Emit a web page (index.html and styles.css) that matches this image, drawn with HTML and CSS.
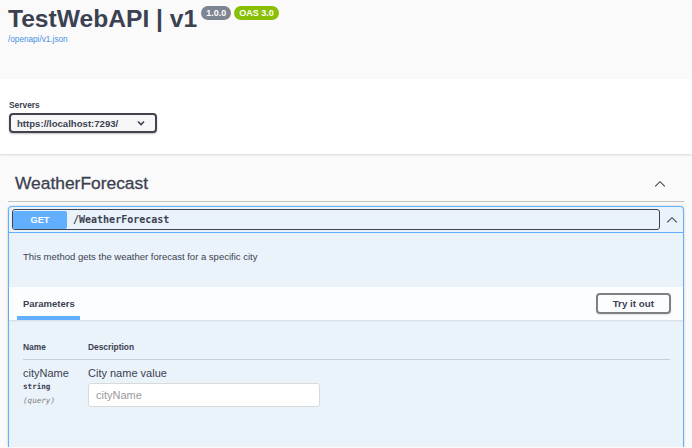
FILE: index.html
```html
<!DOCTYPE html>
<html lang="en">
<head>
    <meta charset="UTF-8">
    <meta name="viewport" content="width=device-width, initial-scale=1.0">
    <title>TestWebAPI | v1</title>
    <link rel="stylesheet" href="styles.css">
</head>
<body>
    <!-- Info -->
    <div class="info">
        <div class="title-row">
            <h1 class="title">TestWebAPI | v1</h1>
            <div class="badges">
                <span class="badge badge-version">1.0.0</span>
                <span class="badge badge-oas">OAS 3.0</span>
            </div>
        </div>
        <a class="spec-link" href="#">/openapi/v1.json</a>
    </div>

    <!-- Servers -->
    <div class="scheme">
        <span class="servers-label">Servers</span>
        <div class="select">
            <span>https://localhost:7293/</span>
            <svg width="8" height="6" viewBox="0 0 8 6"><polyline points="1,1.5 4,4.5 7,1.5" fill="none" stroke="#3b4151" stroke-width="1.6"/></svg>
        </div>
    </div>

    <div class="wrapper">
        <div class="tag">
            <h3>WeatherForecast</h3>
            <svg class="chevron" width="12" height="12" viewBox="0 0 20 20"><polyline points="2,14 10,6 18,14" fill="none" stroke="#3b4151" stroke-width="1.7"/></svg>
        </div>

        <div class="opblock">
            <div class="summary">
                <div class="summary-control">
                    <span class="method">GET</span>
                    <span class="path">/WeatherForecast</span>
                </div>
                <div class="arrow">
                    <svg width="12" height="12" viewBox="0 0 20 20"><polyline points="2,14 10,6 18,14" fill="none" stroke="#3b4151" stroke-width="1.7"/></svg>
                </div>
            </div>

            <div class="description">This method gets the weather forecast for a specific city</div>

            <div class="params-header">
                <div class="tab">
                    <h4 class="tab-label">Parameters</h4>
                    <div class="tab-line"></div>
                </div>
                <button class="try-btn">Try it out</button>
            </div>

            <div class="params">
                <div class="param-head">
                    <span>Name</span>
                    <span>Description</span>
                </div>
                <div class="param-row">
                    <div>
                        <div class="param-name">cityName</div>
                        <div class="param-type">string</div>
                        <div class="param-type param-in">(query)</div>
                    </div>
                    <div>
                        <div class="param-desc">City name value</div>
                        <input class="param-input" type="text" placeholder="cityName">
                    </div>
                </div>
            </div>
        </div>
    </div>
</body>
</html>
```

FILE: styles.css
```css
/* General */
body {
    margin: 0;
    background: #fafafa;
    font-family: "Liberation Sans", Arial, sans-serif;
    color: #3b4151;
    overflow: hidden;
}

/* Info block */
.info {
    height: 74px;
    padding: 5px 8px 0;
}

.title-row {
    display: flex;
    align-items: flex-start;
    gap: 4px;
}

.title {
    margin: 0;
    font-size: 24.6px;
    font-weight: 700;
    line-height: 28px;
}

.badges {
    display: flex;
    gap: 3px;
    margin-top: 1px;
}

.badge {
    color: #fff;
    font-size: 9px;
    font-weight: 700;
    line-height: 14px;
    padding: 0 5px;
    border-radius: 8px;
}

.badge-version {
    background: #7d8492;
}

.badge-oas {
    background: #89bf04;
}

.spec-link {
    display: block;
    margin-top: 2px;
    font-size: 8.2px;
    line-height: 10px;
    color: #4990e2;
    text-decoration: none;
}

/* Servers */
.scheme {
    background: #fff;
    box-shadow: 0 1px 2px 0 rgba(0, 0, 0, 0.15);
    padding: 21px 9px;
}

.servers-label {
    display: block;
    font-size: 8.4px;
    font-weight: 700;
    line-height: 11px;
    margin-bottom: 2px;
}

.select {
    width: 148px;
    height: 20px;
    box-sizing: border-box;
    display: flex;
    align-items: center;
    justify-content: space-between;
    padding: 0 10px 0 6px;
    border: 2px solid #41444e;
    border-radius: 4px;
    background: #f7f7f7;
    box-shadow: 0 1px 2px 0 rgba(0, 0, 0, 0.25);
    font-size: 9.6px;
    font-weight: 700;
}

/* Operations */
.wrapper {
    padding: 12px 8px 0;
}

.tag {
    display: flex;
    align-items: center;
    justify-content: space-between;
    padding: 7px 18px 7px 7px;
    margin-bottom: 4px;
    border-bottom: 1px solid rgba(59, 65, 81, 0.3);
}

.tag h3 {
    margin: 0;
    font-size: 17.4px;
    font-weight: 400;
    line-height: 21px;
    -webkit-text-stroke: 0.3px #3b4151;
}

.opblock {
    height: 240px;
    border: 1px solid #61affe;
    border-bottom: 0;
    border-radius: 4px 4px 0 0;
    background: rgba(97, 175, 254, 0.1);
    box-shadow: 0 0 3px rgba(0, 0, 0, 0.19);
}

.summary {
    display: flex;
    align-items: center;
    padding: 2px 0 2px 3px;
    border-bottom: 1px solid #61affe;
}

.summary-control {
    flex: 1;
    height: 21px;
    box-sizing: border-box;
    display: flex;
    align-items: center;
    border: 1px solid #41444e;
    border-radius: 3px;
}

.method {
    width: 54px;
    height: 18px;
    line-height: 18px;
    background: #61affe;
    color: #fff;
    border-radius: 2px;
    font-size: 9.2px;
    font-weight: 700;
    text-align: center;
}

.path {
    padding-left: 6px;
    font-family: "DejaVu Sans Mono", monospace;
    font-size: 10px;
    font-weight: 600;
}

.arrow {
    width: 23px;
    display: flex;
    justify-content: center;
}

.description {
    padding: 18px 14px 24px;
    font-size: 9.5px;
    line-height: 12px;
}

.params-header {
    height: 33px;
    box-sizing: border-box;
    display: flex;
    align-items: center;
    justify-content: space-between;
    padding: 0 12px 0 14px;
    background: rgba(255, 255, 255, 0.8);
    box-shadow: 0 1px 2px rgba(0, 0, 0, 0.1);
}

.tab {
    align-self: stretch;
    display: flex;
    flex-direction: column;
    padding-top: 11px;
    box-sizing: border-box;
}

.tab-label {
    margin: 0 0 6px;
    font-size: 9.5px;
    font-weight: 700;
    line-height: 12px;
}

.tab-line {
    height: 4px;
    margin: 0 -5px 0 -6px;
    background: #61affe;
}

.try-btn {
    height: 21px;
    padding: 0 15px;
    border: 2px solid #808080;
    border-radius: 4px;
    background: transparent;
    box-shadow: 0 1px 2px rgba(0, 0, 0, 0.1);
    color: #3b4151;
    font-family: "Liberation Sans", Arial, sans-serif;
    font-size: 9.8px;
    font-weight: 700;
}

/* Parameters table */
.params {
    padding: 21px 13px 0 14px;
}

.param-head {
    display: grid;
    grid-template-columns: 65px 1fr;
    padding-bottom: 6px;
    border-bottom: 1px solid rgba(59, 65, 81, 0.2);
    font-size: 8.4px;
    font-weight: 700;
    line-height: 12px;
}

.param-row {
    display: grid;
    grid-template-columns: 65px 1fr;
    padding-top: 7px;
}

.param-name,
.param-desc {
    font-size: 11px;
    line-height: 13px;
}

.param-type {
    font-family: "DejaVu Sans Mono", monospace;
    font-size: 7.6px;
    font-weight: 700;
    line-height: 14px;
}

.param-in {
    font-style: italic;
    font-weight: 400;
    color: #808080;
}

.param-input {
    display: block;
    width: 232px;
    height: 24px;
    box-sizing: border-box;
    margin-top: 3px;
    padding: 0 7px;
    border: 1px solid #d9d9d9;
    border-radius: 3px;
    background: #fff;
    color: #3b4151;
    font-family: "Liberation Sans", Arial, sans-serif;
    font-size: 11px;
}

.param-input::placeholder {
    color: #9a9a9a;
}
```
